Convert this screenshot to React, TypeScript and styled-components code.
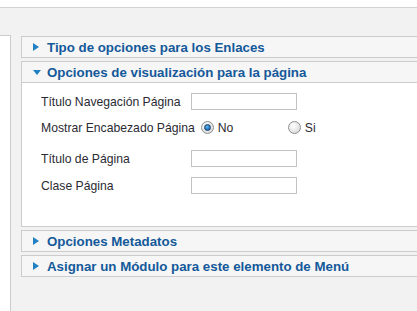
import styled, { createGlobalStyle } from 'styled-components';

const GlobalStyle = createGlobalStyle`
  html, body {
    margin: 0;
    padding: 0;
    background: #ffffff;
    overflow: hidden;
    font-family: 'Liberation Sans', Arial, sans-serif;
  }
`;

const StyledPage = styled.div`
  padding-top: 7px;
  width: 417px;
  height: 311px;
  box-sizing: border-box;
  overflow: hidden;
`;

const StyledShell = styled.div`
  display: flex;
  gap: 10px;
  height: 304px;
  box-sizing: border-box;
  padding-top: 27px;
  background: #f2f2f2;
  border-top: 1px solid #d2d2d2;
  overflow: hidden;
`;

const StyledSidebar = styled.div`
  width: 10px;
  flex-shrink: 0;
  background: #ffffff;
  border-top: 1px solid #cccccc;
  border-right: 1px solid #cccccc;
`;

// panels run on past the right edge of the frame, as in the screenshot
const StyledColumn = styled.div`
  flex: 1;
  margin-top: 1px;
  margin-right: -20px;
  display: flex;
  flex-direction: column;
  gap: 3px;
`;

const StyledPanel = styled.div`
  border: 1px solid #cccccc;
  background: #ffffff;
`;

const StyledHeader = styled.div<{ $open?: boolean }>`
  height: 20px;
  display: flex;
  align-items: center;
  gap: 8px;
  padding-left: 11px;
  background: #f6f6f6;
  border-bottom: ${({ $open }) => ($open ? '1px solid #cccccc' : 'none')};
  cursor: pointer;
  h3 {
    margin: 0;
    font-size: 13.3px;
    font-weight: bold;
    color: #14599a;
    white-space: nowrap;
  }
`;

const StyledArrow = styled.span<{ $open?: boolean }>`
  display: inline-block;
  width: 0;
  height: 0;
  ${({ $open }) =>
    $open
      ? `
    border-left: 4px solid transparent;
    border-right: 4px solid transparent;
    border-top: 5px solid #2180c2;
    margin-right: -2px;
  `
      : `
    border-top: 4.5px solid transparent;
    border-bottom: 4.5px solid transparent;
    border-left: 6px solid #2180c2;
  `}
`;

const StyledBody = styled.div`
  padding: 10px 0 32px 19px;
`;

const StyledRow = styled.div<{ $space?: number }>`
  display: flex;
  align-items: center;
  height: 17px;
  margin-top: ${({ $space }) => $space ?? 0}px;
  font-size: 12.2px;
  color: #2b2b33;
  label {
    white-space: nowrap;
  }
  .fixed {
    width: 150px;
  }
`;

const StyledInput = styled.input`
  width: 106px;
  height: 17px;
  box-sizing: border-box;
  margin: 0;
  padding: 0 3px;
  border: 1px solid #c2c2c2;
  background: #ffffff;
  font-size: 12px;
`;

const StyledOption = styled.div`
  width: 87px;
  display: flex;
  align-items: center;
  gap: 4px;
  &:first-of-type {
    margin-left: 6px;
  }
`;

const StyledRadio = styled.span<{ $checked?: boolean }>`
  width: 13px;
  height: 13px;
  box-sizing: border-box;
  border-radius: 50%;
  border: 1px solid #8d8f91;
  background: radial-gradient(circle at 40% 35%, #ffffff 0%, #e4e4e4 60%, #cfcfcf 100%);
  display: flex;
  align-items: center;
  justify-content: center;
  &::after {
    content: '';
    display: ${({ $checked }) => ($checked ? 'block' : 'none')};
    width: 5px;
    height: 5px;
    border-radius: 50%;
    background: radial-gradient(circle at 40% 35%, #5fb4ef 0%, #1a6fb8 70%);
    border: 1px solid #1d3f66;
  }
`;

const Panel = ({ title, open, children }: { title: string; open?: boolean; children?: React.ReactNode }) => (
  <StyledPanel>
    <StyledHeader $open={open}>
      <StyledArrow $open={open} />
      <h3>{title}</h3>
    </StyledHeader>
    {open && children}
  </StyledPanel>
);

const App = () => {
  return (
    <>
      <GlobalStyle />
      <StyledPage>
        <StyledShell>
          <StyledSidebar />
          <StyledColumn>
            <Panel title='Tipo de opciones para los Enlaces' />
            <Panel title='Opciones de visualización para la página' open>
              <StyledBody>
                <StyledRow>
                  <label className='fixed'>Título Navegación Página</label>
                  <StyledInput type='text' />
                </StyledRow>
                <StyledRow $space={9}>
                  <label>Mostrar Encabezado Página</label>
                  <StyledOption>
                    <StyledRadio $checked />
                    <span>No</span>
                  </StyledOption>
                  <StyledOption>
                    <StyledRadio />
                    <span>Si</span>
                  </StyledOption>
                </StyledRow>
                <StyledRow $space={14}>
                  <label className='fixed'>Título de Página</label>
                  <StyledInput type='text' />
                </StyledRow>
                <StyledRow $space={10}>
                  <label className='fixed'>Clase Página</label>
                  <StyledInput type='text' />
                </StyledRow>
              </StyledBody>
            </Panel>
            <Panel title='Opciones Metadatos' />
            <Panel title='Asignar un Módulo para este elemento de Menú' />
          </StyledColumn>
        </StyledShell>
      </StyledPage>
    </>
  );
};

export default App;
